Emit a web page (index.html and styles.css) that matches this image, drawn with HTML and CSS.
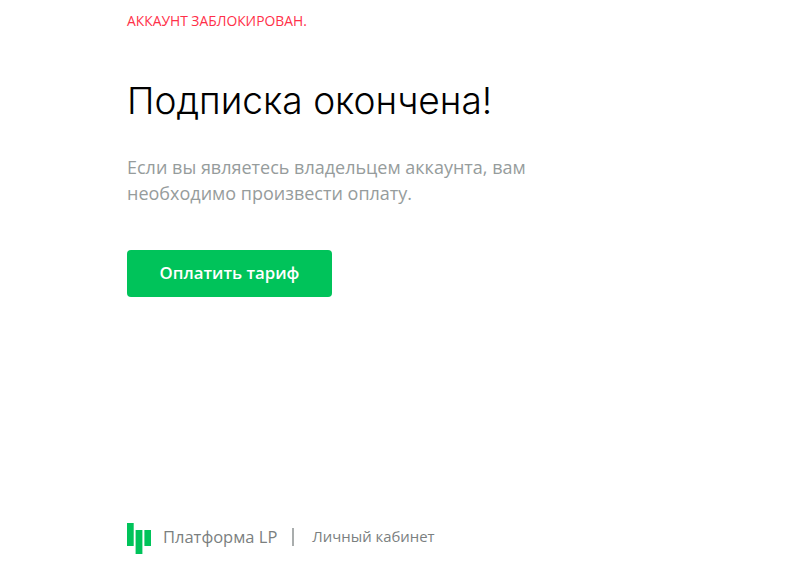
FILE: index.html
```html
<!DOCTYPE html>
<html lang="ru">
<head>
  <meta charset="UTF-8">
  <title>Подписка окончена</title>
  <link rel="stylesheet" href="styles.css">
</head>
<body>
  <div class="page">
    <div class="main">
      <div class="status">АККАУНТ ЗАБЛОКИРОВАН.</div>
      <h1>Подписка окончена!</h1>
      <p class="note">Если вы являетесь владельцем аккаунта, вам необходимо произвести оплату.</p>
      <a class="pay" href="#">Оплатить тариф</a>
    </div>

    <div class="footer">
      <svg class="logo" width="24" height="31" viewBox="0 0 24 31">
        <rect x="0" y="0" width="6.7" height="23" fill="#00c35a"></rect>
        <rect x="8.6" y="7" width="6.8" height="24" fill="#00c35a"></rect>
        <rect x="17.4" y="7" width="6.6" height="16" fill="#00c35a"></rect>
      </svg>
      <span class="brand">Платформа LP</span>
      <span class="sep"></span>
      <span class="cabinet">Личный кабинет</span>
    </div>
  </div>
</body>
</html>
```

FILE: styles.css
```css
* { box-sizing: border-box; margin: 0; padding: 0; }

body {
  font-family: 'Open Sans', 'Noto Sans', sans-serif;
  background: #fff;
}

.page {
  height: 565px;
  padding: 0 127px;
  display: flex;
  flex-direction: column;
  overflow: hidden;
}

.main {
  flex: 1;
}

.status {
  margin-top: 13px;
  font-size: 13.85px;
  line-height: 16px;
  color: #ff3049;
}

h1 {
  margin-top: 44px;
  font-family: Inter, sans-serif;
  font-size: 37.1px;
  line-height: 56px;
  font-weight: 300;
  color: #000;
}

.note {
  margin-top: 25px;
  width: 420px;
  font-size: 18px;
  line-height: 26px;
  color: #969c9c;
}

.pay {
  display: block;
  margin-top: 44px;
  width: 205px;
  height: 47px;
  background: #00c35a;
  border-radius: 4px;
  color: #fff;
  font-size: 16.8px;
  font-weight: 600;
  line-height: 46px;
  text-align: center;
  text-decoration: none;
}

.footer {
  display: flex;
  align-items: center;
  height: 31px;
  margin-bottom: 11px;
  color: #7b7f7f;
}

.logo {
  margin-right: 12px;
}

.brand {
  font-size: 16.5px;
  margin-bottom: 5px;
}

.sep {
  width: 2px;
  height: 18px;
  background: #a9adad;
  margin: 0 18px 3px 15px;
}

.cabinet {
  font-size: 14.9px;
  margin-bottom: 5px;
}
```
